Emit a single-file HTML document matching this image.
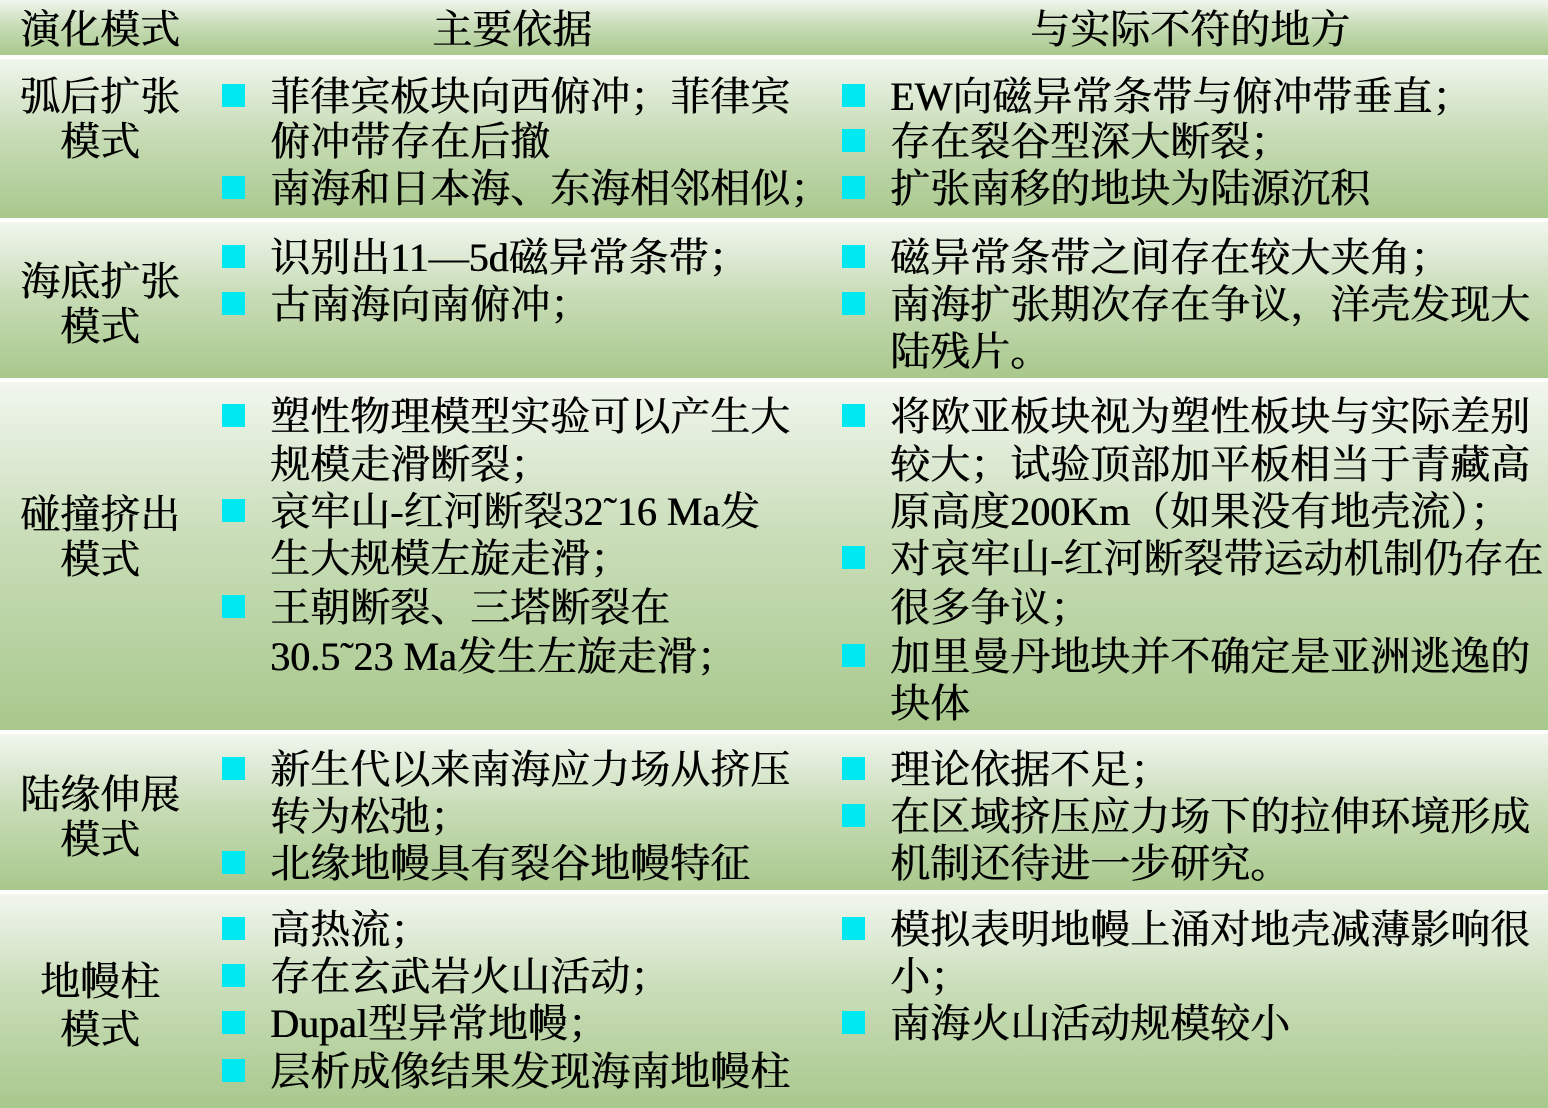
<!DOCTYPE html>
<html><head><meta charset="utf-8"><style>
body{margin:0;width:1548px;height:1108px;background:#fff;position:relative;overflow:hidden;font-family:"Liberation Serif","Noto Serif CJK SC",serif;color:#000}
.r{position:absolute;left:0;width:1548px;background:linear-gradient(#f1f6ee,#c9ddb8 45%,#a8c88c)}
.t{position:absolute;font-size:40px;line-height:46px;white-space:nowrap;text-shadow:0.6px 0 0 #000;margin-top:2px}
.c{left:0;width:200px;text-align:center}
.b{position:absolute;width:23px;height:23px;background:#00e8f0}
</style></head><body>
<div class="r" style="top:0;height:55px"></div>
<div class="r" style="top:59px;height:159px"></div>
<div class="r" style="top:222px;height:156px"></div>
<div class="r" style="top:382px;height:348px"></div>
<div class="r" style="top:734px;height:156px"></div>
<div class="r" style="top:894px;height:214px"></div>

<div class="t c" style="top:5px">演化模式</div>
<div class="t" style="top:5px;left:432px">主要依据</div>
<div class="t" style="top:5px;left:1030px">与实际不符的地方</div>

<div class="t c" style="top:72px">弧后扩张</div>
<div class="t c" style="top:117px">模式</div>
<div class="t c" style="top:257px">海底扩张</div>
<div class="t c" style="top:302px">模式</div>
<div class="t c" style="top:490px">碰撞挤出</div>
<div class="t c" style="top:535px">模式</div>
<div class="t c" style="top:770px">陆缘伸展</div>
<div class="t c" style="top:815px">模式</div>
<div class="t c" style="top:957px">地幔柱</div>
<div class="t c" style="top:1005px">模式</div>

<!-- col2 -->
<div class="b" style="left:222px;top:84px"></div><div class="t" style="left:270px;top:72px">菲律宾板块向西俯冲；菲律宾</div>
<div class="t" style="left:270px;top:117px">俯冲带存在后撤</div>
<div class="b" style="left:222px;top:176px"></div><div class="t" style="left:270px;top:164px">南海和日本海、东海相邻相似；</div>

<div class="b" style="left:222px;top:245px"></div><div class="t" style="left:270px;top:233px">识别出11—5d磁异常条带；</div>
<div class="b" style="left:222px;top:292px"></div><div class="t" style="left:270px;top:280px">古南海向南俯冲；</div>

<div class="b" style="left:222px;top:404px"></div><div class="t" style="left:270px;top:392px">塑性物理模型实验可以产生大</div>
<div class="t" style="left:270px;top:440px">规模走滑断裂；</div>
<div class="b" style="left:222px;top:499px"></div><div class="t" style="left:270px;top:487px">哀牢山-红河断裂32˜16 Ma发</div>
<div class="t" style="left:270px;top:534px">生大规模左旋走滑；</div>
<div class="b" style="left:222px;top:595px"></div><div class="t" style="left:270px;top:583px">王朝断裂、三塔断裂在</div>
<div class="t" style="left:270px;top:632px">30.5˜23 Ma发生左旋走滑；</div>

<div class="b" style="left:222px;top:757px"></div><div class="t" style="left:270px;top:745px">新生代以来南海应力场从挤压</div>
<div class="t" style="left:270px;top:792px">转为松弛；</div>
<div class="b" style="left:222px;top:851px"></div><div class="t" style="left:270px;top:839px">北缘地幔具有裂谷地幔特征</div>

<div class="b" style="left:222px;top:917px"></div><div class="t" style="left:270px;top:905px">高热流；</div>
<div class="b" style="left:222px;top:964px"></div><div class="t" style="left:270px;top:952px">存在玄武岩火山活动；</div>
<div class="b" style="left:222px;top:1011px"></div><div class="t" style="left:270px;top:999px">Dupal型异常地幔；</div>
<div class="b" style="left:222px;top:1059px"></div><div class="t" style="left:270px;top:1047px">层析成像结果发现海南地幔柱</div>

<!-- col3 -->
<div class="b" style="left:842px;top:84px"></div><div class="t" style="left:890px;top:72px">EW向磁异常条带与俯冲带垂直；</div>
<div class="b" style="left:842px;top:129px"></div><div class="t" style="left:890px;top:117px">存在裂谷型深大断裂；</div>
<div class="b" style="left:842px;top:176px"></div><div class="t" style="left:890px;top:164px">扩张南移的地块为陆源沉积</div>

<div class="b" style="left:842px;top:245px"></div><div class="t" style="left:890px;top:233px">磁异常条带之间存在较大夹角；</div>
<div class="b" style="left:842px;top:292px"></div><div class="t" style="left:890px;top:280px">南海扩张期次存在争议，洋壳发现大</div>
<div class="t" style="left:890px;top:327px">陆残片。</div>

<div class="b" style="left:842px;top:404px"></div><div class="t" style="left:890px;top:392px">将欧亚板块视为塑性板块与实际差别</div>
<div class="t" style="left:890px;top:440px">较大；试验顶部加平板相当于青藏高</div>
<div class="t" style="left:890px;top:487px">原高度200Km（如果没有地壳流）；</div>
<div class="b" style="left:842px;top:546px"></div><div class="t" style="left:890px;top:534px">对哀牢山-红河断裂带运动机制仍存在</div>
<div class="t" style="left:890px;top:583px">很多争议；</div>
<div class="b" style="left:842px;top:644px"></div><div class="t" style="left:890px;top:632px">加里曼丹地块并不确定是亚洲逃逸的</div>
<div class="t" style="left:890px;top:679px">块体</div>

<div class="b" style="left:842px;top:757px"></div><div class="t" style="left:890px;top:745px">理论依据不足；</div>
<div class="b" style="left:842px;top:804px"></div><div class="t" style="left:890px;top:792px">在区域挤压应力场下的拉伸环境形成</div>
<div class="t" style="left:890px;top:839px">机制还待进一步研究。</div>

<div class="b" style="left:842px;top:917px"></div><div class="t" style="left:890px;top:905px">模拟表明地幔上涌对地壳减薄影响很</div>
<div class="t" style="left:890px;top:952px">小；</div>
<div class="b" style="left:842px;top:1011px"></div><div class="t" style="left:890px;top:999px">南海火山活动规模较小</div>
</body></html>
